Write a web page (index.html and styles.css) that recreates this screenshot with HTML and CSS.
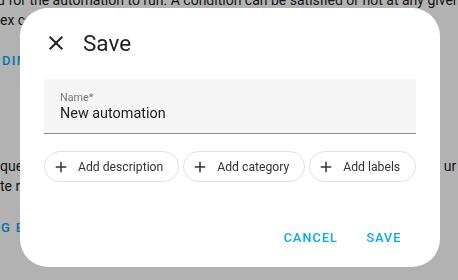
FILE: index.html
```html
<!DOCTYPE html>
<html lang="en">
<head>
<meta charset="utf-8">
<title>Save automation</title>
<link rel="stylesheet" href="styles.css">
</head>
<body>
<div class="page">
  <p class="line l1">d for the automation to run. A condition can be satisfied or not at any given</p>
  <p class="line">ex conditions</p>
  <p class="line link l3">DING</p>
  <div class="line split l4"><span>que</span><span>ur au</span></div>
  <p class="line">te rules</p>
  <p class="line link l6">G BLOCK</p>
</div>
<div class="scrim"></div>
<div class="dialog" role="dialog" aria-label="Save">
  <header class="dialog-header">
    <button class="icon-btn" aria-label="Close">
      <svg viewBox="0 0 24 24" width="24" height="24"><path d="M19 6.41L17.59 5 12 10.59 6.41 5 5 6.41 10.59 12 5 17.59 6.41 19 12 13.41 17.59 19 19 17.59 13.41 12z"/></svg>
    </button>
    <h2 class="title">Save</h2>
  </header>
  <div class="content">
    <div class="field">
      <span class="field-label">Name*</span>
      <span class="field-value">New automation</span>
    </div>
    <div class="chips">
      <button class="chip"><svg viewBox="0 0 24 24" width="18" height="18"><path d="M19 13h-6v6h-2v-6H5v-2h6V5h2v6h6v2z"/></svg><span>Add description</span></button>
      <button class="chip"><svg viewBox="0 0 24 24" width="18" height="18"><path d="M19 13h-6v6h-2v-6H5v-2h6V5h2v6h6v2z"/></svg><span>Add category</span></button>
      <button class="chip"><svg viewBox="0 0 24 24" width="18" height="18"><path d="M19 13h-6v6h-2v-6H5v-2h6V5h2v6h6v2z"/></svg><span>Add labels</span></button>
    </div>
  </div>
  <div class="actions">
    <button class="text-btn">Cancel</button>
    <button class="text-btn">Save</button>
  </div>
</div>
</body>
</html>
```
FILE: styles.css
```css
html, body {
  margin: 0;
  padding: 0;
  height: 100%;
  overflow: hidden;
}
body {
  background: #ffffff;
  font-family: Roboto, "Liberation Sans", sans-serif;
  color: #212121;
}
.page {
  display: flex;
  flex-direction: column;
  margin-top: -10px;
}
.line {
  margin: 0;
  font-size: 14px;
  line-height: 20px;
  white-space: nowrap;
  color: #212121;
}
.l1 { margin-left: -3px; }
.link {
  color: #03a9f4;
  font-weight: 500;
  font-size: 13px;
  text-transform: uppercase;
  letter-spacing: 1.3px;
}
.l3 { margin-top: 21px; margin-left: 2px; }
.l4 { margin-top: 85px; }
.l6 { margin-top: 22px; margin-left: 1px; }
.split {
  display: flex;
  justify-content: space-between;
  margin-right: -17px;
}
.scrim {
  position: fixed;
  inset: 0;
  background: rgba(0, 0, 0, 0.3);
}
.dialog {
  position: fixed;
  left: 20px;
  top: 8px;
  width: 420px;
  height: 259px;
  background: #ffffff;
  border-radius: 28px;
  display: flex;
  flex-direction: column;
  box-sizing: border-box;
}
.dialog-header {
  display: flex;
  align-items: center;
  padding: 11px 0 0 12px;
  height: 48px;
}
.icon-btn {
  width: 48px;
  height: 48px;
  border: 0;
  padding: 0;
  background: transparent;
  display: flex;
  align-items: center;
  justify-content: center;
  fill: #212121;
}
.title {
  margin: 0 0 0 3px;
  font-size: 22.5px;
  font-weight: 400;
  line-height: 28px;
  color: #212121;
}
.content {
  padding: 0 24px;
  margin-top: 12px;
}
.field {
  height: 55px;
  box-sizing: border-box;
  background: #f5f5f5;
  border-radius: 4px 4px 0 0;
  border-bottom: 1px solid #8c8c8c;
  padding: 12px 16px 0;
  display: flex;
  flex-direction: column;
}
.field-label {
  font-size: 10.8px;
  line-height: 14px;
  color: #7a7a7a;
}
.field-value {
  font-size: 14.4px;
  line-height: 18px;
  color: #212121;
}
.chips {
  display: flex;
  gap: 4px;
  margin-top: 17px;
}
.chip {
  flex-shrink: 0;
  white-space: nowrap;
  height: 31px;
  box-sizing: border-box;
  border: 1px solid #e0e0e0;
  border-radius: 16px;
  background: #ffffff;
  padding: 0 15px 0 7px;
  display: flex;
  align-items: center;
  gap: 8px;
  font-family: Roboto, "Liberation Sans", sans-serif;
  font-size: 12.2px;
  font-weight: 400;
  color: #333333;
  fill: #333333;
}
.chip svg { flex-shrink: 0; }
.actions {
  margin-top: auto;
  display: flex;
  justify-content: flex-end;
  gap: 6px;
  padding: 0 24px 12px;
}
.text-btn {
  min-width: 64px;
  height: 36px;
  padding: 0 8px;
  border: 0;
  background: transparent;
  font-family: Roboto, "Liberation Sans", sans-serif;
  font-size: 12.6px;
  font-weight: 500;
  letter-spacing: 1.1px;
  text-transform: uppercase;
  color: #03a9f4;
}
```
